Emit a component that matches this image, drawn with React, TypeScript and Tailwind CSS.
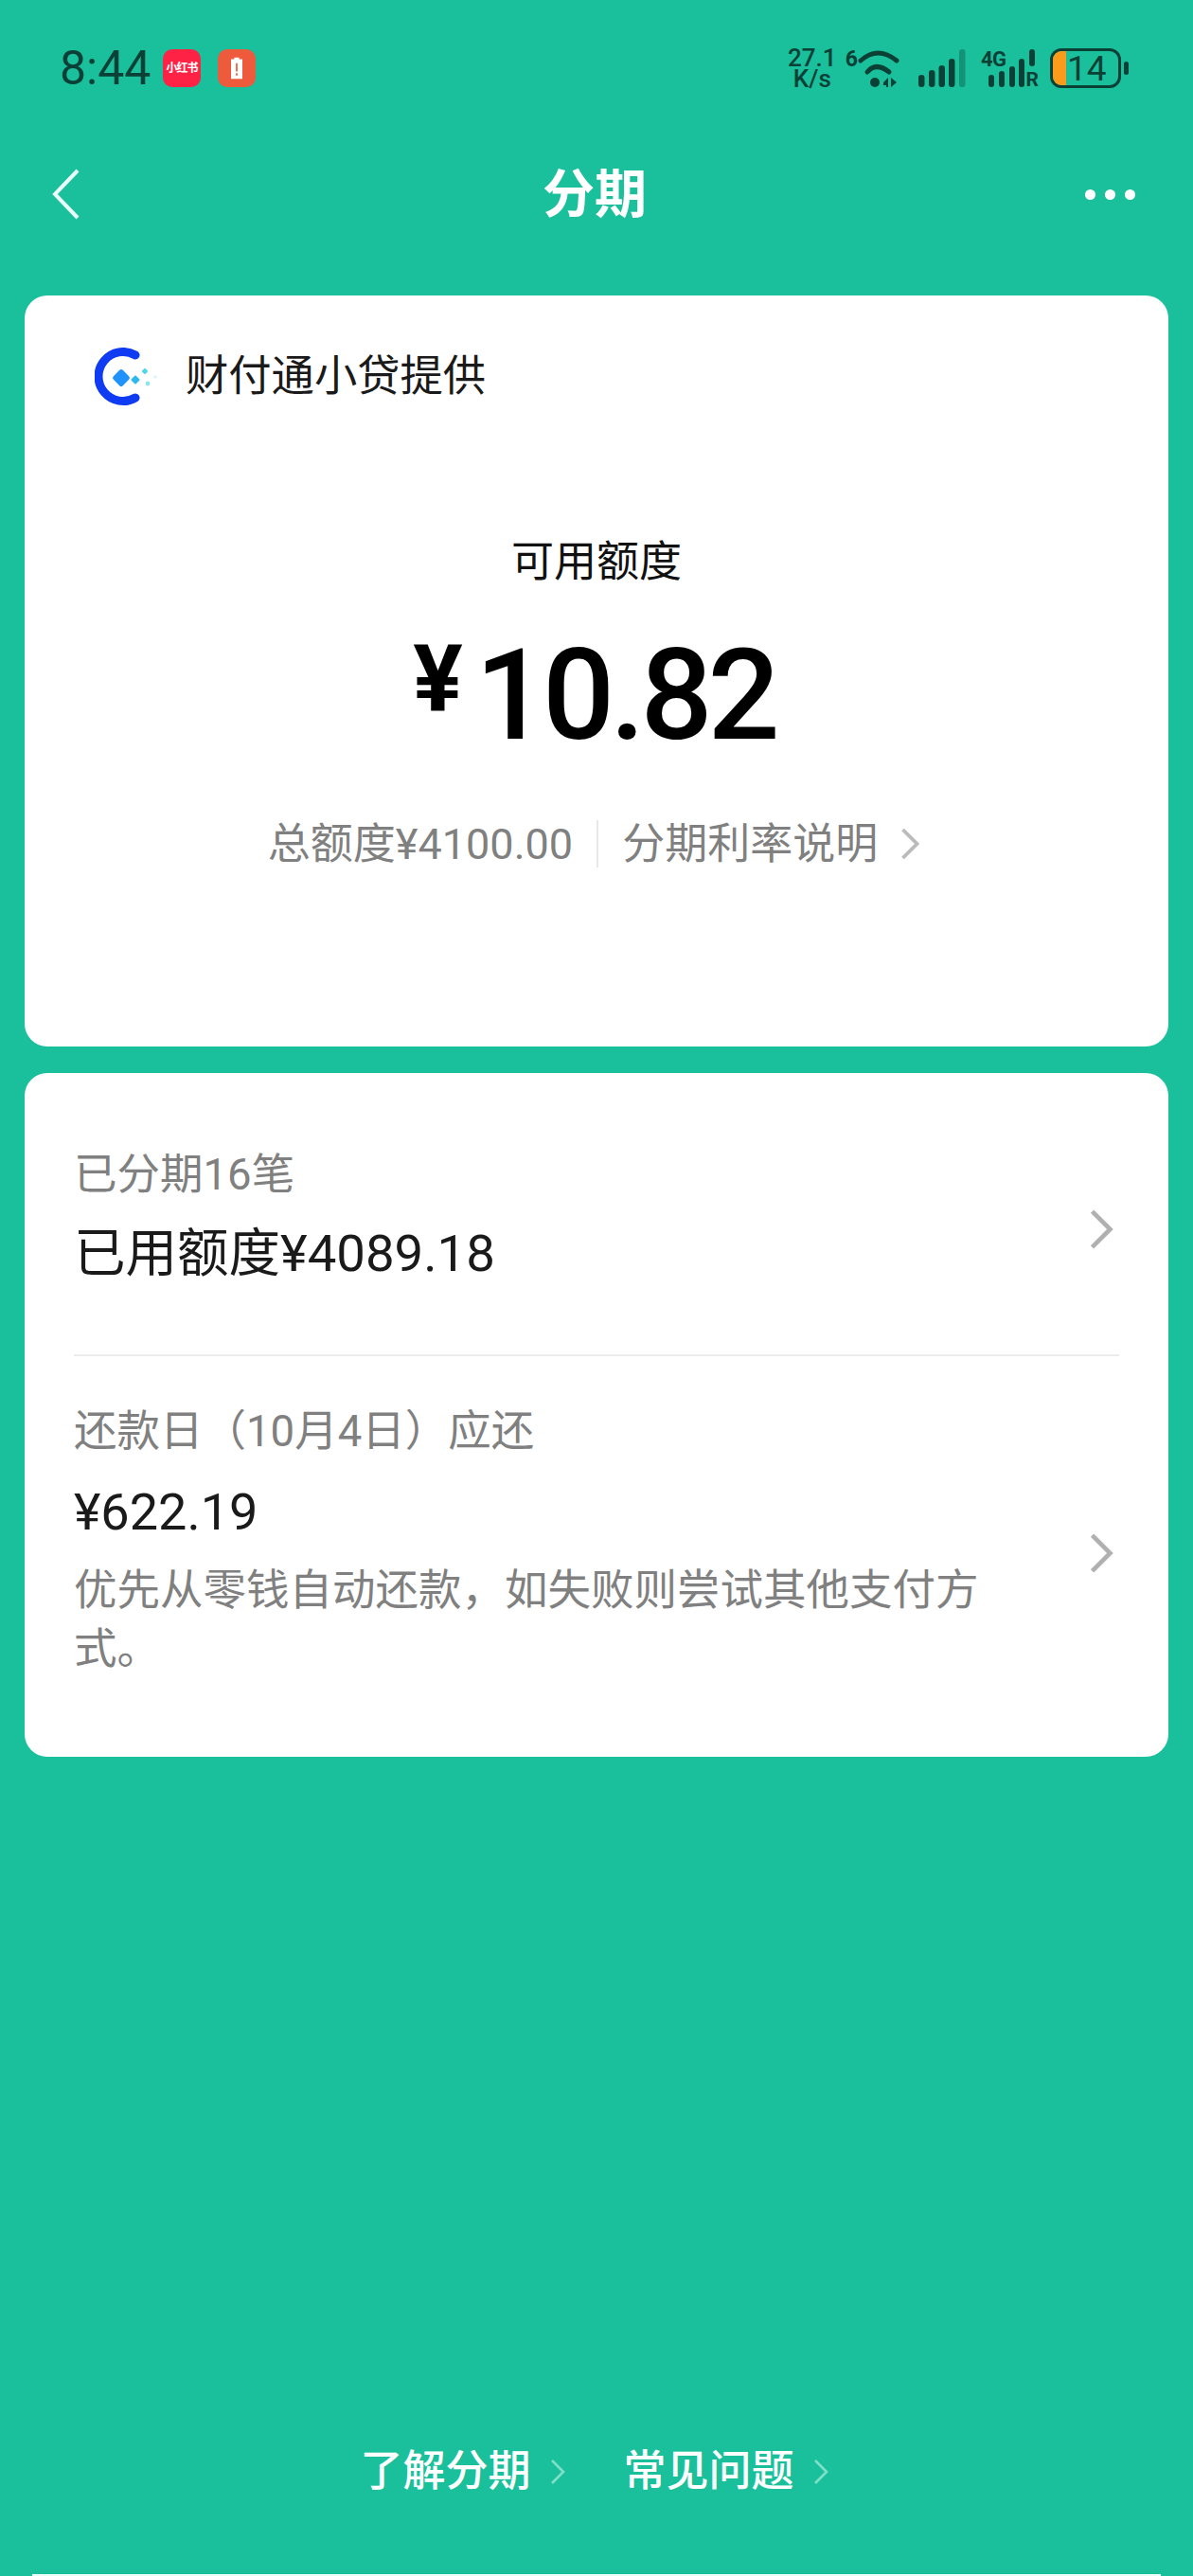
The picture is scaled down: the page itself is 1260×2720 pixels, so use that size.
import React from 'react';

const Chevron = ({ className, width = 3.6 }: { className: string; width?: number }) => (
  <svg viewBox="0 0 24 40" fill="none" className={className}>
    <path d="M3 2 L21 20 L3 38" stroke="currentColor" strokeWidth={width} />
  </svg>
);

const StatusBar = () => (
  <div className="h-[144px] flex items-center pl-[63px] text-[#0a4035]">
    <span className="text-[50px] leading-none w-[109px]">8:44</span>
    <div className="w-[40px] h-[40px] rounded-[10px] bg-[#fe2344] flex items-center justify-center text-white text-[12px] font-bold tracking-[-1px] whitespace-nowrap">
      小红书
    </div>
    <div className="ml-[18px] w-[40px] h-[40px] rounded-[10px] bg-[#ee5a3c] flex items-center justify-center">
      <svg viewBox="0 0 14 26" className="w-[12px] h-[24px]">
        <path d="M4 0h6v2h4v24H0V2h4z" fill="#fff" />
        <path d="M6 7h2v10H6zM6 19h2v3H6z" fill="#ee5a3c" />
      </svg>
    </div>
    <div className="ml-auto mr-[68px] flex items-center">
      <div className="w-[52px] text-[26px] leading-[22px] text-center font-medium">
        <div>27.1</div>
        <div>K/s</div>
      </div>
      {/* wifi */}
      <div className="ml-[9px] flex items-start h-[40px]">
        <span className="text-[23px] leading-[22px] font-bold">6</span>
        <svg viewBox="0 0 44 40" className="w-[44px] h-[40px]" fill="none" stroke="currentColor" strokeLinecap="round">
          <path d="M3 12 Q21 -4 41 12" strokeWidth="5" />
          <path d="M10 24 Q19 13 33 24" strokeWidth="5" />
          <circle cx="18" cy="35" r="5" fill="currentColor" stroke="none" />
          <path d="M27 35 l5 -5 v10 h-2v-2h-3z M35 30 l6 5 l-6 5z" fill="currentColor" stroke="none" />
        </svg>
      </div>
      {/* sim 1 */}
      <svg viewBox="0 0 50 40" className="ml-[20px] w-[50px] h-[40px]">
        <rect x="0" y="27" width="6.5" height="13" rx="3.2" fill="currentColor" />
        <rect x="11" y="22" width="6.5" height="18" rx="3.2" fill="currentColor" />
        <rect x="21.5" y="17" width="6.5" height="23" rx="3.2" fill="currentColor" />
        <rect x="32" y="10" width="6.5" height="30" rx="3.2" fill="currentColor" />
        <rect x="43" y="0" width="6.5" height="40" rx="3.2" fill="currentColor" opacity="0.35" />
      </svg>
      {/* sim 2 */}
      <div className="relative ml-[16px] w-[60px] h-[40px]">
        <svg viewBox="0 0 60 40" className="w-[60px] h-[40px]">
          <rect x="8" y="27" width="6" height="13" rx="3" fill="currentColor" />
          <rect x="19" y="23" width="6" height="17" rx="3" fill="currentColor" />
          <rect x="30" y="18" width="6" height="22" rx="3" fill="currentColor" />
          <rect x="40" y="10" width="6" height="30" rx="3" fill="currentColor" />
          <rect x="51" y="0" width="6" height="18" rx="3" fill="currentColor" />
        </svg>
        <span className="absolute left-0 top-[1px] text-[22px] leading-[20px] font-bold tracking-[-0.5px]">4G</span>
        <span className="absolute right-[-1px] bottom-[-2px] text-[21px] leading-[20px] font-bold">R</span>
      </div>
      {/* battery */}
      <div className="ml-[13px] w-[75px] h-[42px] rounded-[12px] border-[3px] border-[#0a4035] flex items-center overflow-hidden">
        <div className="w-[14px] h-full bg-[#fb9b1c] shrink-0" />
        <span className="ml-[1px] text-[37px] leading-none">14</span>
      </div>
      <div className="ml-[3px] w-[5px] h-[14px] rounded-full bg-[#0a4035]" />
    </div>
  </div>
);

const NavBar = () => (
  <div className="h-[122px] flex items-center pl-[55px] pr-[61px] text-white">
    <svg viewBox="0 0 30 54" fill="none" className="w-[30px] h-[54px]">
      <path d="M27 2 L3 27 L27 52" stroke="#e8fffa" strokeWidth="4" />
    </svg>
    <div className="flex-1 text-center text-[55px] font-semibold leading-none pl-[25px]">分期</div>
    <div className="flex gap-[10px]">
      <div className="w-[11px] h-[11px] rounded-full bg-white" />
      <div className="w-[11px] h-[11px] rounded-full bg-white" />
      <div className="w-[11px] h-[11px] rounded-full bg-white" />
    </div>
  </div>
);

const Logo = () => (
  <svg viewBox="0 0 70 62" className="w-[70px] h-[62px]">
    <path d="M46 8 A26 26 0 1 0 46 53" fill="none" stroke="#0f3cf2" strokeWidth="9" strokeLinecap="round" transform="translate(-3 0)" />
    <rect x="21" y="25" width="14" height="14" rx="2.5" fill="#2092fb" transform="rotate(45 28 32)" />
    <rect x="39.5" y="30.5" width="7" height="7" rx="1" fill="#2eb8ee" transform="rotate(45 43 34)" />
    <rect x="50.5" y="22.5" width="5" height="5" rx="1" fill="#52d5e4" transform="rotate(45 53 25)" />
    <circle cx="56" cy="38" r="2.4" fill="#8ee5ef" />
    <circle cx="64" cy="31" r="1.6" fill="#d4f5f8" />
  </svg>
);

export default function App() {
  return (
    <div
      className="w-[1260px] h-[2720px] bg-[#1abf9b] flex flex-col overflow-hidden"
      style={{ fontFamily: 'Roboto, "Noto Sans CJK SC", sans-serif' }}
    >
      <StatusBar />
      <NavBar />

      {/* quota card */}
      <div className="mt-[46px] mx-[26px] h-[793px] bg-white rounded-[24px] flex flex-col items-center">
        <div className="self-start mt-[55px] ml-[74px] h-[62px] flex items-center">
          <Logo />
          <span className="ml-[26px] text-[45.3px] leading-none text-[#1a1a1a]">财付通小贷提供</span>
        </div>
        <div className="mt-[140px] h-[50px] flex items-center text-[45px] text-[#111]">可用额度</div>
        <div className="mt-[51px] h-[130px] flex items-center pr-[5px] text-black font-medium">
          <span className="text-[98px] leading-none font-bold mr-[13px] mb-[34px]">¥</span>
          <span className="text-[134px] leading-none tracking-[-5px]">10.82</span>
        </div>
        <div className="mt-[66px] h-[50px] flex items-center pr-[6px] text-[45px] leading-none text-[#808080]">
          <span>总额度¥4100.00</span>
          <div className="mx-[25px] w-[2px] h-[50px] bg-[#e8e8e8]" />
          <span>分期利率说明</span>
          <Chevron className="ml-[24px] w-[20px] h-[34px] text-[#bbbbbb]" width={4.5} />
        </div>
      </div>

      {/* instalment card */}
      <div className="mt-[28px] mx-[26px] h-[722px] bg-white rounded-[24px] px-[52px]">
        <div className="h-[299px] flex items-center justify-between border-b-2 border-[#ececec]">
          <div className="flex flex-col pt-[3px]">
            <span className="text-[45.5px] leading-[56px] text-[#808080]">已分期16笔</span>
            <span className="mt-[24px] text-[54.5px] leading-[60px] text-[#1a1a1a]">已用额度¥4089.18</span>
          </div>
          <Chevron className="mt-[32px] w-[26px] h-[42px] text-[#b0b0b0] mr-[6px]" width={4.5} />
        </div>
        <div className="h-[423px] flex items-start justify-between">
          <div className="flex flex-col w-[960px] pt-[52px]">
            <span className="text-[45.5px] leading-[56px] text-[#808080]">还款日（10月4日）应还</span>
            <span className="mt-[27px] text-[54px] leading-[60px] text-[#1a1a1a]">¥622.19</span>
            <span className="mt-[22px] text-[45.5px] leading-[62px] text-[#808080]">优先从零钱自动还款，如失败则尝试其他支付方式。</span>
          </div>
          <Chevron className="mt-[187px] w-[26px] h-[42px] text-[#b0b0b0] mr-[6px]" width={4.5} />
        </div>
      </div>

      {/* footer links */}
      <div className="mt-auto mb-[86px] flex items-center justify-center pr-[5px] text-white text-[45px] font-medium leading-none">
        <span>了解分期</span>
        <Chevron className="ml-[20px] w-[16px] h-[28px] text-[#7fe0c8]" width={4} />
        <span className="ml-[62px]">常见问题</span>
        <Chevron className="ml-[20px] w-[16px] h-[28px] text-[#7fe0c8]" width={4} />
      </div>
      <div className="mx-[34px] h-[2px] bg-[#ecfffa]" />
    </div>
  );
}
